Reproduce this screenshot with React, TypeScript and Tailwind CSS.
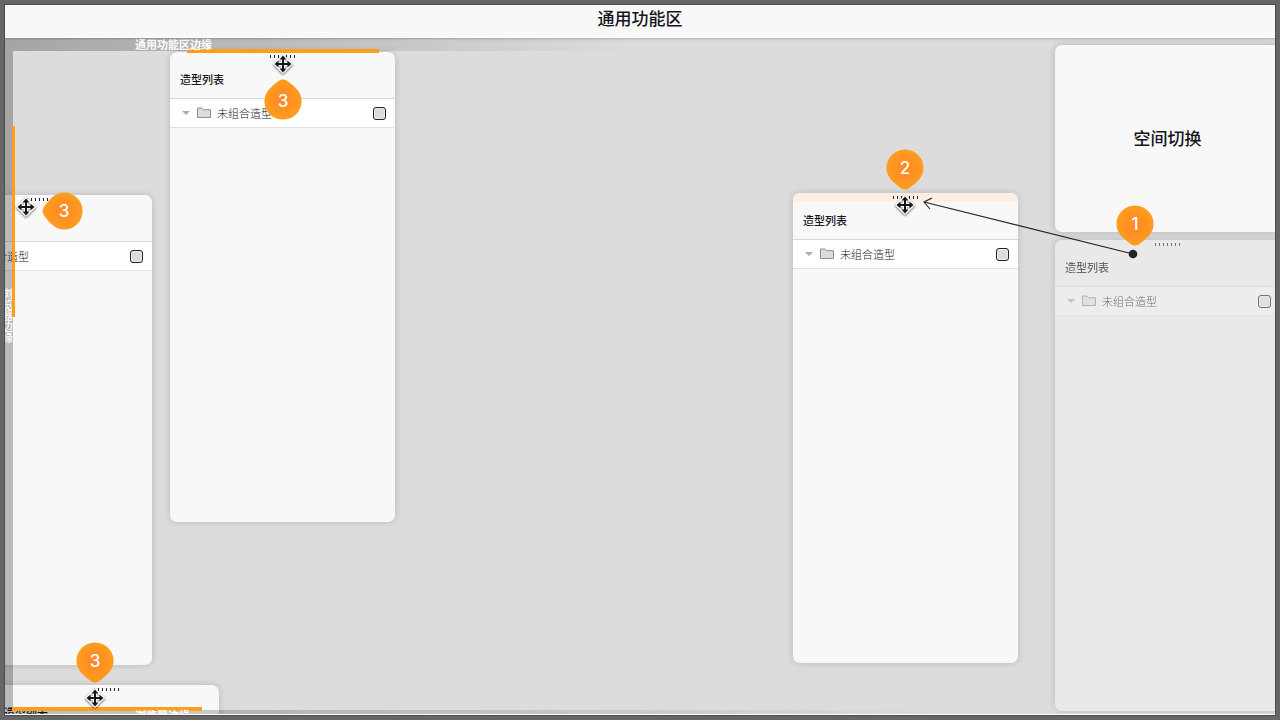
import clsx from "clsx";
import { useId } from "react";

const GRIP_TICKS = [0, 1, 2, 3, 4, 5, 6];

function Grip() {
  return (
    <div className="flex h-[6px] items-end justify-center gap-[3px]">
      {GRIP_TICKS.map((tick) => (
        <span key={tick} className="h-[3px] w-px bg-[#22222c]" />
      ))}
    </div>
  );
}

function FolderIcon() {
  return (
    <svg width="14" height="12" viewBox="0 0 14 12" className="shrink-0">
      <path
        d="M.5 10.5v-9.5h4.3l1.6 1.7h7.1v7.8z"
        fill="#dcdcdc"
        stroke="#8e8e8e"
        strokeLinejoin="round"
      />
    </svg>
  );
}

function ShapePanel({ className, active, faded }: { className?: string; active?: boolean; faded?: boolean }) {
  const id = useId();

  return (
    <section
      className={clsx(
        "w-[225px] overflow-hidden rounded-[7px] shadow-[0_0_7px_rgba(0,0,0,0.16)]",
        faded ? "bg-[#e9e9e9]" : "bg-[#f8f8f8]",
        className
      )}
    >
      <div className={clsx(faded && "opacity-60")}>
        <header
          className={clsx(
            "border-b border-[#d8d8d8]",
            active && "bg-linear-to-b from-[#fbeee3] from-[9px] to-[#f8f8f8] to-[9px]"
          )}
        >
          <Grip />
          <h2 className="px-[10px] pt-3 pb-[10px] text-[11px] leading-[18px] font-medium text-[#15151d]">
            造型列表
          </h2>
        </header>
        <div
          className={clsx(
            "flex h-[29px] items-center border-b border-[#e0e0e0] pr-[9px] pl-3",
            faded ? "bg-[#f1f1f1]" : "bg-white"
          )}
        >
          <button type="button" aria-label="展开" className="mr-[7px] flex">
            <svg width="8" height="4" viewBox="0 0 8 4">
              <path d="M0 0h8L4 4z" fill="#acacac" />
            </svg>
          </button>
          <FolderIcon />
          <label htmlFor={id} className="ml-[6px] grow text-[11px] font-light text-[#15151d]">
            未组合造型
          </label>
          <input
            id={id}
            type="checkbox"
            className="size-[13px] appearance-none rounded-[3px] border border-[#22222c] bg-[#dcdcdc] shadow-[inset_0_0_0_1px_#ebebeb]"
          />
        </div>
      </div>
    </section>
  );
}

function MoveCursor() {
  return (
    <svg
      width="22"
      height="22"
      viewBox="-11 -11 22 22"
      className="shrink-0 overflow-visible drop-shadow-[0_1px_1px_rgba(0,0,0,0.6)]"
    >
      <path d="M0-9.6 9.6 0 0 9.6-9.6 0z" fill="#fff" stroke="#fff" strokeLinejoin="round" />
      <path d="M0-6V6M-6 0H6" stroke="#15151d" strokeWidth="2" />
      <path
        d="M0-8.5 3.5-4.400H-3.5zM0 8.5 3.5 4.400H-3.5zM-8.500 0-4.400-3.500V3.500zM8.500 0 4.400-3.500V3.500z"
        fill="#15151d"
      />
      <path d="M-3.500-3h1M2.500-3h1M-3.500 3h1M2.500 3h1" stroke="#15151d" strokeWidth="1" />
    </svg>
  );
}

const PIN_ROTATION = { up: "rotate(180)", down: "rotate(0)", left: "rotate(90)" };

function Pin({ value, point }: { value: number; point: "up" | "down" | "left" }) {
  const gradient = useId();

  return (
    <div className="grid size-[38px] shrink-0 place-items-center">
      <svg viewBox="-19 -19 38 38" className="col-start-1 row-start-1 size-full overflow-visible">
        <defs>
          <radialGradient id={gradient}>
            <stop offset="0" stopColor="#ff8628" />
            <stop offset="1" stopColor="#ff9d1c" />
          </radialGradient>
        </defs>
        <path
          d="M0-18.6C10.4-18.6 18.6-10.3 18.6 0 18.6 8.500 12 14.500 4 20.200Q0 22.600-4 20.200C-12 14.500-18.600 8.500-18.600 0-18.600-10.300-10.400-18.600 0-18.600z"
          transform={PIN_ROTATION[point]}
          fill={`url(#${gradient})`}
        />
      </svg>
      <span className="col-start-1 row-start-1 font-[Inter,sans-serif] text-[17px] leading-5 font-medium text-white">
        {value}
      </span>
    </div>
  );
}

// Areas along the window border where a dragged panel can dock
function SnapEdges() {
  return (
    <div className="pointer-events-none absolute inset-0 flex flex-col">
      <div className="h-[13px] w-1/2 shrink-0 bg-linear-to-r from-black/25 to-transparent pl-[130px]">
        <p className="text-[11px] leading-[13px] font-bold text-white">通用功能区边缘</p>
        <div className="-mt-[2px] ml-[52px] h-[4px] w-[192px] bg-[#ff9d1c]" />
      </div>
      <div className="flex min-h-0 flex-1">
        <div className="flex w-2 justify-end bg-black/25 pt-[237px]">
          <p className="w-[11px] shrink-0 text-[11px] leading-[11px] font-medium text-white">浏览器边缘</p>
        </div>
        <div className="mt-[75px] -ml-px h-[191px] w-[3px] bg-[#ff9d1c]" />
      </div>
      <div className="h-1 w-3/4 shrink-0 bg-linear-to-r from-black/25 to-transparent">
        <div className="-mt-[3px] ml-[7px] h-[4px] w-[190px] bg-[#ff9d1c]" />
        <p className="-mt-[2px] pl-[130px] text-[11px] leading-[13px] font-bold text-white">浏览器边缘</p>
      </div>
    </div>
  );
}

export default function App() {
  return (
    <div className="h-screen border-4 border-[#666] bg-[#666] font-['Noto_Sans_CJK_SC',sans-serif]">
      <div className="flex h-full flex-col overflow-hidden border border-[#4c4c4c]">
        <header className="z-10 flex h-[33px] shrink-0 items-center justify-center border-y border-white bg-[#f8f8f8] pb-[7px] shadow-[0_0_3px_rgba(0,0,0,0.4)]">
          <h1 className="text-[17px] leading-6 font-medium text-[#15151d]">通用功能区</h1>
        </header>

        <main className="relative flex min-h-0 flex-1 justify-end overflow-hidden border-b border-white bg-[#dcdcdc]">
          <aside className="flex w-[220px] flex-col gap-2 pt-[7px] pb-[3px]">
            <section className="flex h-[187px] w-[225px] shrink-0 items-center justify-center rounded-[7px] bg-[#f8f8f8] pb-[2px] shadow-[0_0_7px_rgba(0,0,0,0.2)]">
              <h2 className="text-[17px] leading-6 font-medium text-[#15151d]">空间切换</h2>
            </section>
            <ShapePanel faded className="min-h-0 flex-1" />
          </aside>

          {/* dragged panels */}
          <ShapePanel className="absolute top-[14px] left-[165px] h-[470px]" />
          <ShapePanel className="absolute top-[157px] left-[-78px] h-[470px]" />
          <ShapePanel className="absolute bottom-[-441px] left-[-11px] h-[470px]" />
          <ShapePanel active className="absolute top-[155px] right-[257px] h-[470px]" />

          <SnapEdges />

          {/* drag path from the dock to the canvas */}
          <svg width="220" height="64" viewBox="0 0 220 64" className="absolute top-[158px] right-[135px]">
            <path d="M4 6 213 58M12 2 4 6 10 13" fill="none" stroke="#22222a" strokeWidth="1.1" />
            <circle cx="213" cy="58" r="4.300" fill="#22222a" />
          </svg>

          <div className="absolute top-[15px] left-[259px] flex flex-col items-center gap-[7px]">
            <MoveCursor />
            <Pin value={3} point="up" />
          </div>
          <div className="absolute top-[154px] left-[10px] flex gap-[8px] pt-0">
            <div className="pt-1">
              <MoveCursor />
            </div>
            <Pin value={3} point="left" />
          </div>
          <div className="absolute bottom-[5px] left-[71px] flex flex-col items-center gap-[7px]">
            <Pin value={3} point="down" />
            <MoveCursor />
          </div>
          <div className="absolute top-[111px] right-[351px] flex flex-col items-center gap-[7px]">
            <Pin value={2} point="down" />
            <MoveCursor />
          </div>
          <div className="absolute top-[167px] right-[121px]">
            <Pin value={1} point="down" />
          </div>
        </main>
      </div>
    </div>
  );
}
